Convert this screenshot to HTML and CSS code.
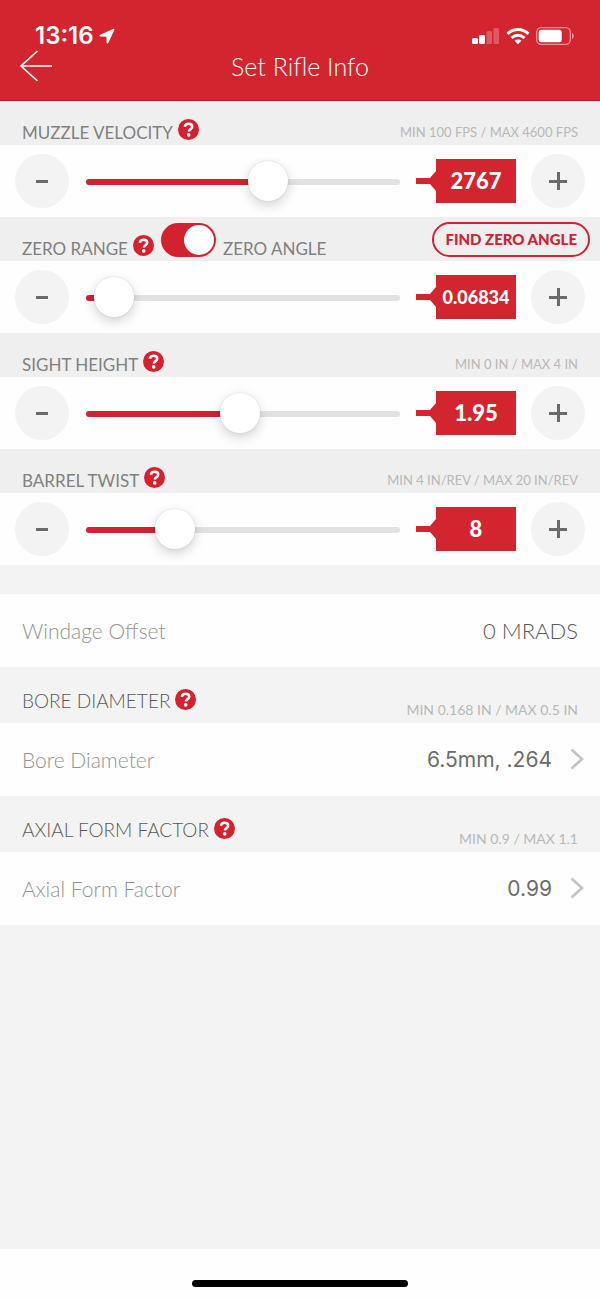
FILE: index.html
```html
<!DOCTYPE html>
<html lang="en">
<head>
    <meta charset="UTF-8">
    <meta name="viewport" content="width=device-width, initial-scale=1.0">
    <title>Set Rifle Info</title>
    <link rel="stylesheet" href="styles.css">
</head>
<body>

<!-- Shared icons -->
<svg class="hidden">
    <symbol id="icon-help" viewBox="0 0 21 21">
        <circle cx="10.5" cy="10.5" r="10.5" fill="#d3212f"/>
        <path d="M6.800 7.800C7.200 5.600 8.700 4.700 10.600 4.700c2.100 0 3.600 1.200 3.600 3 0 2.500-3.300 2.400-3.300 4.900" fill="none" stroke="#fff" stroke-width="2.600"/>
        <circle cx="10.700" cy="15.900" r="1.800" fill="#fff"/>
    </symbol>
    <symbol id="icon-chevron" viewBox="0 0 14 22">
        <path d="M1.500 1.500L12 11 1.500 20.500" fill="none" stroke="#c4c4ca" stroke-width="2.800"/>
    </symbol>
</svg>

<header>
    <div class="status-bar">
        <span class="time">13:16</span>
        <svg class="location" width="16" height="16" viewBox="0 0 16 16"><path d="M14.500 .8L1.200 6.800c-1 .5-.8 1.700.2 1.700l6 .2.200 5.800c0 1.100 1.300 1.300 1.800.2L15.400 1.700c.3-.7-.2-1.200-.9-.9z" fill="#fff"/></svg>
        <div class="status-icons">
            <svg width="28" height="18" viewBox="0 0 28 18" fill="#fff">
                <rect x="0" y="11" width="6" height="6" rx="1.500"/>
                <rect x="7" y="8" width="6" height="9" rx="1.500"/>
                <rect x="14.500" y="4" width="5.500" height="13" rx="1.500" opacity=".25"/>
                <rect x="21.500" y="1" width="5.500" height="16" rx="1.500" opacity=".25"/>
            </svg>
            <svg width="24" height="18" viewBox="0 0 24 18">
                <path d="M1.500 6.800C7.500 1 16.500 1 22.500 6.800M5.500 11C9.500 7.400 14.500 7.400 18.500 11" fill="none" stroke="#fff" stroke-width="3"/>
                <path d="M8.500 13.800c2-1.800 5-1.800 7 0L12 17.300z" fill="#fff"/>
            </svg>
            <svg width="39" height="18" viewBox="0 0 39 18">
                <rect x=".7" y=".7" width="33.600" height="16.600" rx="4.500" fill="none" stroke="#fff" stroke-width="1.300" opacity=".5"/>
                <rect x="2.700" y="2.700" width="23" height="12.600" rx="2.500" fill="#fff"/>
                <path d="M36 6c2.400 1 2.400 5 0 6z" fill="#fff" opacity=".5"/>
            </svg>
        </div>
    </div>
    <div class="nav-bar">
        <button class="back" aria-label="Back">
            <svg width="32" height="32" viewBox="0 0 32 32"><path d="M32 16H1M17.500 1L1 16l16.500 15" fill="none" stroke="#fff" stroke-width="1.600"/></svg>
        </button>
        <h1>Set Rifle Info</h1>
    </div>
</header>

<main>

    <!-- Muzzle Velocity -->
    <div class="section-head">
        <label for="velocity">MUZZLE VELOCITY</label>
        <button class="help" aria-label="Muzzle velocity help"><svg><use href="#icon-help"/></svg></button>
        <span class="limits">MIN 100 FPS / MAX 4600 FPS</span>
    </div>
    <div class="slider-row">
        <button class="step minus" aria-label="Decrease"></button>
        <input type="range" id="velocity" min="100" max="4600" step="1" value="2767">
        <output for="velocity">2767</output>
        <button class="step plus" aria-label="Increase"></button>
    </div>

    <!-- Zero Range / Zero Angle -->
    <div class="section-head">
        <label for="zero">ZERO RANGE</label>
        <button class="help" aria-label="Zero range help"><svg><use href="#icon-help"/></svg></button>
        <input type="checkbox" class="toggle" id="zero-mode" checked>
        <label for="zero-mode">ZERO ANGLE</label>
        <button class="find-zero">FIND ZERO ANGLE</button>
    </div>
    <div class="slider-row">
        <button class="step minus" aria-label="Decrease"></button>
        <input type="range" id="zero" min="0" max="2.3" step="0.00001" value="0.06834">
        <output for="zero" class="long">0.06834</output>
        <button class="step plus" aria-label="Increase"></button>
    </div>

    <!-- Sight Height -->
    <div class="section-head">
        <label for="sight">SIGHT HEIGHT</label>
        <button class="help" aria-label="Sight height help"><svg><use href="#icon-help"/></svg></button>
        <span class="limits">MIN 0 IN / MAX 4 IN</span>
    </div>
    <div class="slider-row">
        <button class="step minus" aria-label="Decrease"></button>
        <input type="range" id="sight" min="0" max="4" step="0.01" value="1.95">
        <output for="sight">1.95</output>
        <button class="step plus" aria-label="Increase"></button>
    </div>

    <!-- Barrel Twist -->
    <div class="section-head">
        <label for="twist">BARREL TWIST</label>
        <button class="help" aria-label="Barrel twist help"><svg><use href="#icon-help"/></svg></button>
        <span class="limits">MIN 4 IN/REV / MAX 20 IN/REV</span>
    </div>
    <div class="slider-row">
        <button class="step minus" aria-label="Decrease"></button>
        <input type="range" id="twist" min="4" max="20" step="0.25" value="8">
        <output for="twist">8</output>
        <button class="step plus" aria-label="Increase"></button>
    </div>

    <!-- Windage Offset -->
    <div class="field-row windage">
        <label for="windage">Windage Offset</label>
        <input type="text" id="windage" value="0 MRADS">
    </div>

    <!-- Bore Diameter -->
    <div class="section-head tall">
        <h2>BORE DIAMETER</h2>
        <button class="help" aria-label="Bore diameter help"><svg><use href="#icon-help"/></svg></button>
        <span class="limits">MIN 0.168 IN / MAX 0.5 IN</span>
    </div>
    <button class="field-row">
        <span class="name">Bore Diameter</span>
        <span class="value">6.5mm, .264</span>
        <svg class="chevron"><use href="#icon-chevron"/></svg>
    </button>

    <!-- Axial Form Factor -->
    <div class="section-head tall">
        <h2>AXIAL FORM FACTOR</h2>
        <button class="help" aria-label="Axial form factor help"><svg><use href="#icon-help"/></svg></button>
        <span class="limits">MIN 0.9 / MAX 1.1</span>
    </div>
    <button class="field-row">
        <span class="name">Axial Form Factor</span>
        <span class="value">0.99</span>
        <svg class="chevron"><use href="#icon-chevron"/></svg>
    </button>

</main>

<footer>
    <div class="home-bar"></div>
</footer>

<script>
    // Paint the red part of the track and show the value
    function updateSlider(slider) {
        const part = (slider.value - slider.min) / (slider.max - slider.min);
        slider.style.setProperty('--part', part);
        slider.parentElement.querySelector('output').textContent = slider.value;
    }

    document.querySelectorAll('.slider-row').forEach(row => {
        const slider = row.querySelector('input');
        updateSlider(slider);
        slider.addEventListener('input', () => updateSlider(slider));
        row.querySelector('.minus').onclick = () => { slider.stepDown(); updateSlider(slider); };
        row.querySelector('.plus').onclick = () => { slider.stepUp(); updateSlider(slider); };
    });
</script>

</body>
</html>
```
FILE: styles.css
```css
* { box-sizing: border-box; }
body { margin: 0; min-height: 100vh; display: flex; flex-direction: column; font-family: Lato, "Liberation Sans", sans-serif; background: #f3f3f3; color: #585858; }
button { padding: 0; border: none; background: none; font-family: inherit; color: inherit; cursor: pointer; }
h1, h2 { margin: 0; font-weight: 300; }
.hidden { display: none; }

/* Header */
header { background: #d3252f; color: white; padding: 24px 20px 18px; border-bottom: 1px solid #c01525; }
.status-bar { display: flex; align-items: center; height: 24px; padding: 0 5px 0 15px; }
.time { font-family: Inter, sans-serif; font-size: 24px; font-weight: 600; line-height: 24px; }
.location { margin-left: 5px; }
.status-icons { display: flex; align-items: center; gap: 6px; margin-left: auto; }
.nav-bar { display: grid; grid-template-columns: 32px 1fr 32px; align-items: center; height: 32px; margin-top: 2px; }
.nav-bar h1 { font-size: 25px; line-height: 32px; text-align: center; }
.back, .back svg { display: block; }

/* Section headings */
.section-head { display: flex; align-items: flex-end; height: 44px; padding: 0 10px 3px 22px; background: #efefef; }
.section-head label { font-size: 17px; line-height: 18px; color: #808080; }
.section-head h2 { font-size: 19px; line-height: 18px; }
.section-head.tall { height: 56px; background: #f3f3f3; }
.section-head.tall h2, .section-head.tall .help { margin-bottom: 10px; }
.help { margin: 0 7px 2px 5px; }
.help svg { display: block; width: 21px; height: 21px; }
.limits { margin: 0 12px 1px auto; font-size: 13px; line-height: 18px; color: #b8b8b8; }
.tall .limits { font-size: 14px; }
.toggle { appearance: none; width: 55px; height: 34px; margin: 0 7px 1px 0; padding: 2px; border-radius: 17px; background: #c8c8c8; display: flex; cursor: pointer; }
.toggle::before { content: ""; width: 30px; height: 30px; border-radius: 50%; background: white; }
.toggle:checked { background: #d3212f; justify-content: flex-end; }
.find-zero { height: 35px; margin: 0 0 1px auto; padding: 0 11px 2px; border: 2px solid #d3212f; border-radius: 18px; color: #d3212f; font-size: 15px; font-weight: 900; }

/* Sliders */
.slider-row { display: flex; align-items: center; gap: 15px; height: 72px; padding: 0 15px; background: #fefefe; }
.step { flex: none; width: 54px; height: 54px; border-radius: 50%; background: linear-gradient(#6a6a6a, #6a6a6a) center / 12px 3px no-repeat #f3f3f3; }
.plus { background: linear-gradient(#6a6a6a, #6a6a6a) center / 18px 3px no-repeat, linear-gradient(#6a6a6a, #6a6a6a) center / 3px 18px no-repeat, #f3f3f3; }
input[type="range"] { appearance: none; flex: 1; min-width: 0; height: 40px; margin: 2px 1px 0 2px; background: none; cursor: pointer; }
input[type="range"]::-webkit-slider-runnable-track { height: 6px; border-radius: 3px; background: linear-gradient(to right, #d3212f calc(20px + (100% - 40px) * var(--part)), #e2e2e5 0); }
input[type="range"]::-webkit-slider-thumb { appearance: none; width: 40px; height: 40px; margin-top: -18px; border-radius: 50%; background: white; box-shadow: 0 4px 12px rgba(0,0,0,0.18), 0 0 2px rgba(0,0,0,0.12); }
output { flex: none; width: 100px; height: 44px; padding-left: 20px; background: #d3252f; color: white; font-size: 22px; font-weight: 900; line-height: 44px; text-align: center; clip-path: polygon(0 19px, 14px 19px, 20px 12px, 20px 0, 100% 0, 100% 100%, 20px 100%, 20px 32px, 14px 25px, 0 25px); }
output.long { font-size: 18px; }

/* Value rows */
.field-row { display: flex; align-items: center; width: 100%; height: 73px; padding: 0 16px 1px 22px; background: #fefefe; text-align: left; font-size: 21px; font-weight: 300; }
.field-row label, .name { color: #949494; }
.windage { margin-top: 29px; padding-right: 22px; }
.windage input { flex: 1; min-width: 0; padding: 0; border: none; background: none; font: inherit; font-size: 22px; color: inherit; text-align: right; }
.value { margin-left: auto; font-family: Inter, sans-serif; font-size: 21px; font-weight: 400; color: #6c6c6c; }
.chevron { width: 14px; height: 22px; margin-left: 18px; }

footer { display: flex; justify-content: center; height: 50px; margin-top: auto; padding-top: 31px; background: #fefefe; }
.home-bar { width: 36%; height: 7px; border-radius: 4px; background: black; }
```
